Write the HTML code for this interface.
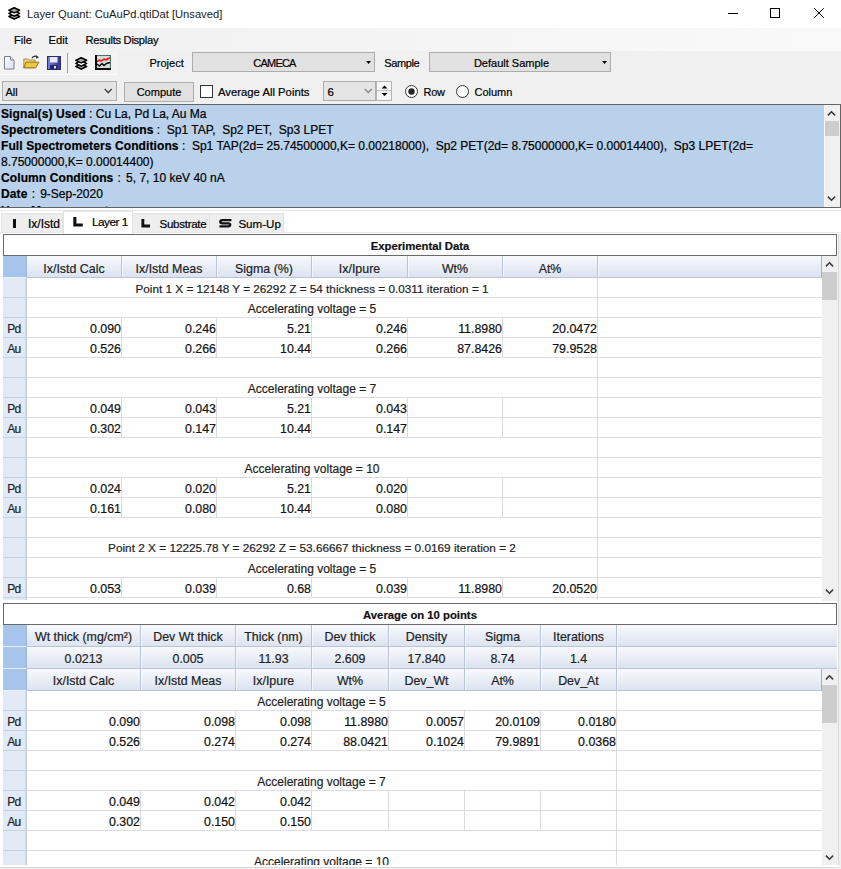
<!DOCTYPE html><html><head><meta charset="utf-8"><style>
html,body{margin:0;padding:0;} body{width:841px;height:869px;overflow:hidden;position:relative;background:#F0F0F0;font-family:"Liberation Sans", sans-serif;}
.t{position:absolute;white-space:pre;-webkit-text-stroke:0.2px currentColor;} .b{position:absolute;box-sizing:border-box;} svg{position:absolute;}
</style></head><body>
<div class="b" style="left:0px;top:0px;width:841px;height:28px;background:#FFFFFF;"></div>
<svg style="left:8px;top:7px" width="13" height="13" viewBox="0 0 13 13"><path d="M0.9 9.5 L6.25 6.8 L11.6 9.5 L6.25 12.2 Z" fill="#9A9A9A" stroke="#000" stroke-width="1.5" stroke-linejoin="round"/><path d="M0.9 6.4 L6.25 3.7 L11.6 6.4 L6.25 9.1 Z" fill="#FFF" stroke="#000" stroke-width="1.5" stroke-linejoin="round"/><path d="M0.9 3.3 L6.25 0.8 L11.6 3.3 L6.25 5.9 Z" fill="#A8A8A8" stroke="#000" stroke-width="1.5" stroke-linejoin="round"/></svg>
<div class="t" style="left:27px;top:8.82px;font-size:11.2px;line-height:11.2px;color:#1A1A1A;-webkit-text-stroke:0;">Layer Quant: CuAuPd.qtiDat [Unsaved]</div>
<div class="b" style="left:728px;top:13px;width:10px;height:1px;background:#000;"></div>
<div class="b" style="left:770px;top:8px;width:10px;height:10px;border:1px solid #000;"></div>
<svg style="left:814px;top:8px" width="10" height="10" viewBox="0 0 10 10"><path d="M0.3 0.3 L9.7 9.7 M9.7 0.3 L0.3 9.7" stroke="#000" stroke-width="1"/></svg>
<div class="b" style="left:0px;top:28px;width:841px;height:23px;background:linear-gradient(to right,#F0F0F0,#F9F9F9);"></div>
<div class="t" style="left:14px;top:35.02px;font-size:11.2px;line-height:11.2px;color:#000;">File</div>
<div class="t" style="left:48.5px;top:35.02px;font-size:11.2px;line-height:11.2px;color:#000;">Edit</div>
<div class="t" style="left:85.6px;top:35.02px;font-size:11.2px;line-height:11.2px;color:#000;letter-spacing:-0.3px;">Results Display</div>
<div class="b" style="left:0px;top:51px;width:118px;height:24px;background:#F3F3F3;border-bottom:1px solid #FDFDFD;"></div>
<svg style="left:3px;top:55px" width="12" height="15" viewBox="0 0 12 15"><defs><linearGradient id="nd" x1="0" y1="0" x2="1" y2="1"><stop offset="0" stop-color="#FFFFFF"/><stop offset="1" stop-color="#D8E0EA"/></linearGradient></defs><path d="M1.5 1.5 H7.5 L11 5 V14 H1.5 Z" fill="url(#nd)" stroke="#7A7F88"/><path d="M7.5 1.5 V5 H11" fill="#F0F0F0" stroke="#7A7F88"/></svg>
<svg style="left:23px;top:54px" width="17" height="15" viewBox="0 0 17 15"><path d="M0.8 5 H4.8 L5.8 6 H12.2 V13.8 H0.8 Z" fill="#EED57A" stroke="#A88A3A" stroke-width="0.9"/><path d="M3 8.2 H16 L12.8 13.8 H0.8 Z" fill="#F0C640" stroke="#8A6A20" stroke-width="0.9"/><path d="M8.8 4.2 Q11 1 14.2 2.6" fill="none" stroke="#303030" stroke-width="1.1"/><path d="M13 1.2 L16 3.2 L13.2 4.8 Z" fill="#303030"/></svg>
<svg style="left:47px;top:56px" width="14" height="14" viewBox="0 0 14 14"><defs><linearGradient id="fl" x1="0" y1="0" x2="1" y2="0"><stop offset="0" stop-color="#8080DA"/><stop offset="1" stop-color="#34348C"/></linearGradient></defs><rect x="0.5" y="0.5" width="13" height="13" fill="url(#fl)" stroke="#2C2C78"/><rect x="3" y="1" width="7.5" height="5.5" fill="#E8ECF8"/><rect x="3" y="9" width="7.5" height="4.5" fill="#262670"/><rect x="7" y="10" width="2" height="2.5" fill="#E0E0F0"/></svg>
<div class="b" style="left:67px;top:53px;width:1px;height:20px;background:#A0A0A0;"></div>
<svg style="left:75px;top:57px" width="13" height="13" viewBox="0 0 13 13"><path d="M0.9 9.5 L6.25 6.8 L11.6 9.5 L6.25 12.2 Z" fill="#9A9A9A" stroke="#000" stroke-width="1.5" stroke-linejoin="round"/><path d="M0.9 6.4 L6.25 3.7 L11.6 6.4 L6.25 9.1 Z" fill="#FFF" stroke="#000" stroke-width="1.5" stroke-linejoin="round"/><path d="M0.9 3.3 L6.25 0.8 L11.6 3.3 L6.25 5.9 Z" fill="#A8A8A8" stroke="#000" stroke-width="1.5" stroke-linejoin="round"/></svg>
<svg style="left:95px;top:55px" width="16" height="15" viewBox="0 0 16 15"><rect x="0" y="0" width="16" height="15" fill="#4F6F6C"/><rect x="2" y="1" width="13" height="12" fill="#D4DCDA"/><path d="M2 6.5 L4.5 5.2 L6.5 5.8 L9 4.2 L11 4.8 L15 2.8" fill="none" stroke="#E01818" stroke-width="1.6"/><path d="M2 9 L4.5 11 L7 8.5 L9 10.5 L11.5 8.5 L15 7.5" fill="none" stroke="#101010" stroke-width="1.4"/><rect x="0" y="0" width="2" height="15" fill="#080808"/><rect x="0" y="13" width="16" height="2" fill="#080808"/></svg>
<div class="t" style="left:149.5px;top:58.19px;font-size:11px;line-height:11px;color:#000;">Project</div>
<div class="b" style="left:192px;top:52px;width:183px;height:20px;background:#E1E1E1;border:1px solid #ADADAD;"></div>
<div class="t" style="left:192px;top:58.19px;font-size:11px;line-height:11px;color:#000;width:165px;text-align:center;letter-spacing:-0.8px;">CAMECA</div>
<svg style="left:366px;top:61px" width="5" height="3" viewBox="0 0 5 3"><path d="M0 0 H5 L2.5 3 Z" fill="#000"/></svg>
<div class="t" style="left:384.3px;top:58.19px;font-size:11px;line-height:11px;color:#000;letter-spacing:-0.4px;">Sample</div>
<div class="b" style="left:429px;top:52px;width:182px;height:20px;background:#E1E1E1;border:1px solid #ADADAD;"></div>
<div class="t" style="left:429px;top:58.19px;font-size:11px;line-height:11px;color:#000;width:165px;text-align:center;">Default Sample</div>
<svg style="left:602px;top:61px" width="5" height="3" viewBox="0 0 5 3"><path d="M0 0 H5 L2.5 3 Z" fill="#000"/></svg>
<div class="b" style="left:2px;top:81px;width:115px;height:20px;background:#E5E5E5;border:1px solid #ADADAD;"></div>
<div class="t" style="left:5.5px;top:87.19px;font-size:11px;line-height:11px;color:#000;">All</div>
<svg style="left:104px;top:88px" width="9" height="6" viewBox="0 0 9 6"><path d="M0.7 0.9 L4.2 4.6 L7.7 0.9" fill="none" stroke="#4A4A4A" stroke-width="1.5"/></svg>
<div class="b" style="left:124px;top:82px;width:70px;height:20px;background:#E1E1E1;border:1px solid #ADADAD;"></div>
<div class="t" style="left:124px;top:86.69px;font-size:11px;line-height:11px;color:#000;width:70px;text-align:center;">Compute</div>
<div class="b" style="left:200px;top:84.5px;width:13px;height:13px;background:#FFF;border:1px solid #333;"></div>
<div class="t" style="left:218px;top:87.43px;font-size:11.3px;line-height:11.3px;color:#000;">Average All Points</div>
<div class="b" style="left:323px;top:81px;width:53px;height:20px;background:#E5E5E5;border:1px solid #ADADAD;"></div>
<div class="t" style="left:327.5px;top:86.77px;font-size:11.5px;line-height:11.5px;color:#000;">6</div>
<svg style="left:363.5px;top:88px" width="9" height="6" viewBox="0 0 9 6"><path d="M0.7 0.9 L4.2 4.6 L7.7 0.9" fill="none" stroke="#8A8A8A" stroke-width="1.4"/></svg>
<div class="b" style="left:376px;top:81px;width:16px;height:20px;background:#F6F6F6;border:1px solid #B5B5B5;"></div>
<div class="b" style="left:377px;top:90px;width:14px;height:1px;background:#C0C0C0;"></div>
<svg style="left:381px;top:84px" width="7" height="14" viewBox="0 0 7 14"><path d="M0.5 4.5 L3.5 1.5 L6.5 4.5 Z M0.5 9 L3.5 12 L6.5 9 Z" fill="#000"/></svg>
<svg style="left:404.5px;top:85px" width="13" height="13" viewBox="0 0 13 13"><circle cx="6.5" cy="6.5" r="6" fill="#FFF" stroke="#333"/><circle cx="6.5" cy="6.5" r="3.2" fill="#222"/></svg>
<div class="t" style="left:423.5px;top:86.69px;font-size:11px;line-height:11px;color:#000;letter-spacing:-0.3px;">Row</div>
<svg style="left:456px;top:85px" width="13" height="13" viewBox="0 0 13 13"><circle cx="6.5" cy="6.5" r="6" fill="#FFF" stroke="#333"/></svg>
<div class="t" style="left:474.5px;top:86.69px;font-size:11px;line-height:11px;color:#000;">Column</div>
<div class="b" style="left:0px;top:104px;width:841px;height:104px;background:#B9D1EA;border-top:1px solid #646464;border-bottom:1px solid #646464;border-right:1px solid #646464;"></div>
<div style="position:absolute;left:0;top:105px;width:823px;height:102px;overflow:hidden;">
<div class="t" style="left:1px;top:3.04px;font-size:12px;line-height:12px;color:#000;"><b style="letter-spacing:0.1px">Signal(s) Used</b> : Cu La, Pd La, Au Ma</div>
<div class="t" style="left:1px;top:19.04px;font-size:12px;line-height:12px;color:#000;"><b style="letter-spacing:0.1px">Spectrometers Conditions</b> :  Sp1 TAP,  Sp2 PET,  Sp3 LPET</div>
<div class="t" style="left:1px;top:35.04px;font-size:12px;line-height:12px;color:#000;"><b style="letter-spacing:0.1px">Full Spectrometers Conditions</b> :  Sp1 TAP(2d= 25.74500000,K= 0.00218000),  Sp2 PET(2d= 8.75000000,K= 0.00014400),  Sp3 LPET(2d=</div>
<div class="t" style="left:1px;top:51.04px;font-size:12px;line-height:12px;color:#000;"><b style="letter-spacing:0.1px"></b>8.75000000,K= 0.00014400)</div>
<div class="t" style="left:1px;top:67.04px;font-size:12px;line-height:12px;color:#000;"><b style="letter-spacing:0.1px">Column Conditions</b><span style="letter-spacing:0.9px"> : </span>5, 7, 10 keV 40 nA</div>
<div class="t" style="left:1px;top:83.04px;font-size:12px;line-height:12px;color:#000;"><b style="letter-spacing:0.1px">Date</b><span style="letter-spacing:0.9px"> : </span>9-Sep-2020</div>
<div class="t" style="left:1px;top:99.54px;font-size:12px;line-height:12px;color:#000;"><b>User Measurement</b> : </div>
</div>
<div class="b" style="left:824px;top:105px;width:16px;height:102px;background:#F0F0F0;border-left:1px solid #FAFAFA;"></div>
<div class="b" style="left:825px;top:121px;width:14px;height:15px;background:#CDCDCD;"></div>
<svg style="left:827.4px;top:109.8px" width="9" height="7" viewBox="0 0 9 7"><path d="M0.9 5.4 L4.5 1.8 L8.1 5.4" fill="none" stroke="#3A3A3A" stroke-width="1.6"/></svg>
<svg style="left:827.4px;top:195.3px" width="9" height="7" viewBox="0 0 9 7"><path d="M0.9 1.6 L4.5 5.2 L8.1 1.6" fill="none" stroke="#3A3A3A" stroke-width="1.6"/></svg>
<div class="b" style="left:0px;top:208px;width:841px;height:26px;background:#FFFFFF;"></div>
<div class="b" style="left:0px;top:210px;width:841px;height:1px;background:#E9E9E9;"></div>
<div class="b" style="left:0px;top:232px;width:841px;height:1px;background:#E6E6E6;"></div>
<div class="b" style="left:1px;top:213px;width:62px;height:19px;background:#EEEEEE;border:1px solid #E2E2E2;border-bottom:none;"></div>
<div class="b" style="left:63px;top:211px;width:70px;height:23px;background:#FFFFFF;border:1px solid #E2E2E2;border-bottom:none;"></div>
<div class="b" style="left:133px;top:213px;width:77px;height:19px;background:#EEEEEE;border:1px solid #E2E2E2;border-bottom:none;border-left:none;"></div>
<div class="b" style="left:210px;top:213px;width:74px;height:19px;background:#EEEEEE;border:1px solid #E2E2E2;border-bottom:none;border-left:none;"></div>
<div class="b" style="left:13px;top:218.5px;width:3px;height:9.5px;background:#111;"></div>
<div class="t" style="left:28px;top:217.84px;font-size:12px;line-height:12px;color:#000;">Ix/Istd</div>
<svg style="left:73px;top:216.5px" width="10" height="10" viewBox="0 0 10 10"><path d="M0.3 0 H3.4 V6.5 H9.8 V9.6 H0.3 Z" fill="#111"/></svg>
<div class="t" style="left:92px;top:217.01px;font-size:11.8px;line-height:11.8px;color:#000;letter-spacing:-0.5px;">Layer 1</div>
<svg style="left:141px;top:219px" width="10" height="9" viewBox="0 0 10 9"><path d="M0.4 0 H3.3 V5.6 H9 V8.5 H0.4 Z" fill="#111"/></svg>
<div class="t" style="left:159.5px;top:218.18px;font-size:11.6px;line-height:11.6px;color:#000;letter-spacing:-0.3px;">Substrate</div>
<svg style="left:219px;top:219px" width="13" height="9" viewBox="0 0 13 9"><path d="M12.4 1.2 H3.4 Q1.3 1.2 1.3 2.7 Q1.3 4.3 3.4 4.3 H9.2 Q11.2 4.3 11.2 5.8 Q11.2 7.4 9.2 7.4 H0.4" fill="none" stroke="#111" stroke-width="2.3"/></svg>
<div class="t" style="left:238.4px;top:218.18px;font-size:11.6px;line-height:11.6px;color:#000;">Sum-Up</div>
<div class="b" style="left:0px;top:234px;width:839px;height:634px;background:#FFFFFF;border-right:1px solid #DADADA;border-bottom:1px solid #DADADA;"></div>
<div class="b" style="left:0px;top:868px;width:841px;height:1px;background:#F0F0F0;"></div>
<div class="b" style="left:3px;top:234px;width:834px;height:22px;background:#FFFFFF;border:1px solid #696969;"></div>
<div class="t" style="left:3px;top:240.93px;font-size:11.3px;line-height:11.3px;color:#111;font-weight:bold;width:834px;text-align:center;">Experimental Data</div>
<div class="b" style="left:3px;top:256px;width:24px;height:22px;background:#A7C5EB;border-bottom:1px solid #E9F0FA;border-right:1px solid #9DB5D5;"></div>
<div class="b" style="left:27px;top:256px;width:795px;height:22px;background:linear-gradient(#F7F9FC,#DCE3F0);border-bottom:1px solid #B9C5D6;border-right:1px solid #9FB0C8;"></div>
<div class="b" style="left:121px;top:256px;width:1px;height:21px;background:#B9C5D6;"></div>
<div class="b" style="left:122px;top:256px;width:1px;height:21px;background:rgba(255,255,255,0.6);"></div>
<div class="b" style="left:216px;top:256px;width:1px;height:21px;background:#B9C5D6;"></div>
<div class="b" style="left:217px;top:256px;width:1px;height:21px;background:rgba(255,255,255,0.6);"></div>
<div class="b" style="left:311px;top:256px;width:1px;height:21px;background:#B9C5D6;"></div>
<div class="b" style="left:312px;top:256px;width:1px;height:21px;background:rgba(255,255,255,0.6);"></div>
<div class="b" style="left:407px;top:256px;width:1px;height:21px;background:#B9C5D6;"></div>
<div class="b" style="left:408px;top:256px;width:1px;height:21px;background:rgba(255,255,255,0.6);"></div>
<div class="b" style="left:502px;top:256px;width:1px;height:21px;background:#B9C5D6;"></div>
<div class="b" style="left:503px;top:256px;width:1px;height:21px;background:rgba(255,255,255,0.6);"></div>
<div class="b" style="left:597px;top:256px;width:1px;height:21px;background:#B9C5D6;"></div>
<div class="b" style="left:598px;top:256px;width:1px;height:21px;background:rgba(255,255,255,0.6);"></div>
<div class="t" style="left:27px;top:263.10px;font-size:12.4px;line-height:12.4px;color:#1E1E1E;width:94px;text-align:center;">Ix/Istd Calc</div>
<div class="t" style="left:122px;top:263.10px;font-size:12.4px;line-height:12.4px;color:#1E1E1E;width:94px;text-align:center;">Ix/Istd Meas</div>
<div class="t" style="left:217px;top:263.10px;font-size:12.4px;line-height:12.4px;color:#1E1E1E;width:94px;text-align:center;">Sigma (%)</div>
<div class="t" style="left:312px;top:263.10px;font-size:12.4px;line-height:12.4px;color:#1E1E1E;width:95px;text-align:center;">Ix/Ipure</div>
<div class="t" style="left:408px;top:263.10px;font-size:12.4px;line-height:12.4px;color:#1E1E1E;width:94px;text-align:center;">Wt%</div>
<div class="t" style="left:503px;top:263.10px;font-size:12.4px;line-height:12.4px;color:#1E1E1E;width:94px;text-align:center;">At%</div>
<div class="b" style="left:3px;top:278px;width:24px;height:322px;background:#E1EAF6;border-right:1px solid #C2CCDA;"></div>
<div class="b" style="left:25px;top:278px;width:1px;height:322px;background:#D3DAE6;"></div>
<div class="b" style="left:3px;top:297px;width:23px;height:1px;background:#C9D2DF;"></div>
<div class="b" style="left:27px;top:297px;width:795px;height:1px;background:#DBDCE4;"></div>
<div class="t" style="left:27px;top:282.95px;font-size:11.75px;line-height:11.75px;color:#1E1E1E;width:570px;text-align:center;">Point 1 X = 12148 Y = 26292 Z = 54 thickness = 0.0311 iteration = 1</div>
<div class="b" style="left:3px;top:317px;width:23px;height:1px;background:#C9D2DF;"></div>
<div class="b" style="left:27px;top:317px;width:795px;height:1px;background:#DBDCE4;"></div>
<div class="t" style="left:27px;top:303.34px;font-size:12px;line-height:12px;color:#1E1E1E;width:570px;text-align:center;">Accelerating voltage = 5</div>
<div class="b" style="left:3px;top:337px;width:23px;height:1px;background:#C9D2DF;"></div>
<div class="b" style="left:27px;top:337px;width:795px;height:1px;background:#DBDCE4;"></div>
<div class="t" style="left:7.2px;top:323.34px;font-size:12px;line-height:12px;color:#1E1E1E;letter-spacing:-0.6px;">Pd</div>
<div class="b" style="left:121px;top:318px;width:1px;height:19px;background:#D8DAE3;"></div>
<div class="b" style="left:216px;top:318px;width:1px;height:19px;background:#D8DAE3;"></div>
<div class="b" style="left:311px;top:318px;width:1px;height:19px;background:#D8DAE3;"></div>
<div class="b" style="left:407px;top:318px;width:1px;height:19px;background:#D8DAE3;"></div>
<div class="b" style="left:502px;top:318px;width:1px;height:19px;background:#D8DAE3;"></div>
<div class="t" style="left:27px;top:323.00px;font-size:12.4px;line-height:12.4px;color:#111;width:94px;text-align:right;">0.090</div>
<div class="t" style="left:122px;top:323.00px;font-size:12.4px;line-height:12.4px;color:#111;width:94px;text-align:right;">0.246</div>
<div class="t" style="left:217px;top:323.00px;font-size:12.4px;line-height:12.4px;color:#111;width:94px;text-align:right;">5.21</div>
<div class="t" style="left:312px;top:323.00px;font-size:12.4px;line-height:12.4px;color:#111;width:95px;text-align:right;">0.246</div>
<div class="t" style="left:408px;top:323.00px;font-size:12.4px;line-height:12.4px;color:#111;width:94px;text-align:right;">11.8980</div>
<div class="t" style="left:503px;top:323.00px;font-size:12.4px;line-height:12.4px;color:#111;width:94px;text-align:right;">20.0472</div>
<div class="b" style="left:3px;top:357px;width:23px;height:1px;background:#C9D2DF;"></div>
<div class="b" style="left:27px;top:357px;width:795px;height:1px;background:#DBDCE4;"></div>
<div class="t" style="left:7.2px;top:343.34px;font-size:12px;line-height:12px;color:#1E1E1E;letter-spacing:-0.6px;">Au</div>
<div class="b" style="left:121px;top:338px;width:1px;height:19px;background:#D8DAE3;"></div>
<div class="b" style="left:216px;top:338px;width:1px;height:19px;background:#D8DAE3;"></div>
<div class="b" style="left:311px;top:338px;width:1px;height:19px;background:#D8DAE3;"></div>
<div class="b" style="left:407px;top:338px;width:1px;height:19px;background:#D8DAE3;"></div>
<div class="b" style="left:502px;top:338px;width:1px;height:19px;background:#D8DAE3;"></div>
<div class="t" style="left:27px;top:343.00px;font-size:12.4px;line-height:12.4px;color:#111;width:94px;text-align:right;">0.526</div>
<div class="t" style="left:122px;top:343.00px;font-size:12.4px;line-height:12.4px;color:#111;width:94px;text-align:right;">0.266</div>
<div class="t" style="left:217px;top:343.00px;font-size:12.4px;line-height:12.4px;color:#111;width:94px;text-align:right;">10.44</div>
<div class="t" style="left:312px;top:343.00px;font-size:12.4px;line-height:12.4px;color:#111;width:95px;text-align:right;">0.266</div>
<div class="t" style="left:408px;top:343.00px;font-size:12.4px;line-height:12.4px;color:#111;width:94px;text-align:right;">87.8426</div>
<div class="t" style="left:503px;top:343.00px;font-size:12.4px;line-height:12.4px;color:#111;width:94px;text-align:right;">79.9528</div>
<div class="b" style="left:3px;top:377px;width:23px;height:1px;background:#C9D2DF;"></div>
<div class="b" style="left:27px;top:377px;width:795px;height:1px;background:#DBDCE4;"></div>
<div class="t" style="left:27px;top:363.34px;font-size:12px;line-height:12px;color:#1E1E1E;width:570px;text-align:center;"></div>
<div class="b" style="left:3px;top:397px;width:23px;height:1px;background:#C9D2DF;"></div>
<div class="b" style="left:27px;top:397px;width:795px;height:1px;background:#DBDCE4;"></div>
<div class="t" style="left:27px;top:383.34px;font-size:12px;line-height:12px;color:#1E1E1E;width:570px;text-align:center;">Accelerating voltage = 7</div>
<div class="b" style="left:3px;top:417px;width:23px;height:1px;background:#C9D2DF;"></div>
<div class="b" style="left:27px;top:417px;width:795px;height:1px;background:#DBDCE4;"></div>
<div class="t" style="left:7.2px;top:403.34px;font-size:12px;line-height:12px;color:#1E1E1E;letter-spacing:-0.6px;">Pd</div>
<div class="b" style="left:121px;top:398px;width:1px;height:19px;background:#D8DAE3;"></div>
<div class="b" style="left:216px;top:398px;width:1px;height:19px;background:#D8DAE3;"></div>
<div class="b" style="left:311px;top:398px;width:1px;height:19px;background:#D8DAE3;"></div>
<div class="b" style="left:407px;top:398px;width:1px;height:19px;background:#D8DAE3;"></div>
<div class="b" style="left:502px;top:398px;width:1px;height:19px;background:#D8DAE3;"></div>
<div class="t" style="left:27px;top:403.00px;font-size:12.4px;line-height:12.4px;color:#111;width:94px;text-align:right;">0.049</div>
<div class="t" style="left:122px;top:403.00px;font-size:12.4px;line-height:12.4px;color:#111;width:94px;text-align:right;">0.043</div>
<div class="t" style="left:217px;top:403.00px;font-size:12.4px;line-height:12.4px;color:#111;width:94px;text-align:right;">5.21</div>
<div class="t" style="left:312px;top:403.00px;font-size:12.4px;line-height:12.4px;color:#111;width:95px;text-align:right;">0.043</div>
<div class="b" style="left:3px;top:437px;width:23px;height:1px;background:#C9D2DF;"></div>
<div class="b" style="left:27px;top:437px;width:795px;height:1px;background:#DBDCE4;"></div>
<div class="t" style="left:7.2px;top:423.34px;font-size:12px;line-height:12px;color:#1E1E1E;letter-spacing:-0.6px;">Au</div>
<div class="b" style="left:121px;top:418px;width:1px;height:19px;background:#D8DAE3;"></div>
<div class="b" style="left:216px;top:418px;width:1px;height:19px;background:#D8DAE3;"></div>
<div class="b" style="left:311px;top:418px;width:1px;height:19px;background:#D8DAE3;"></div>
<div class="b" style="left:407px;top:418px;width:1px;height:19px;background:#D8DAE3;"></div>
<div class="b" style="left:502px;top:418px;width:1px;height:19px;background:#D8DAE3;"></div>
<div class="t" style="left:27px;top:423.00px;font-size:12.4px;line-height:12.4px;color:#111;width:94px;text-align:right;">0.302</div>
<div class="t" style="left:122px;top:423.00px;font-size:12.4px;line-height:12.4px;color:#111;width:94px;text-align:right;">0.147</div>
<div class="t" style="left:217px;top:423.00px;font-size:12.4px;line-height:12.4px;color:#111;width:94px;text-align:right;">10.44</div>
<div class="t" style="left:312px;top:423.00px;font-size:12.4px;line-height:12.4px;color:#111;width:95px;text-align:right;">0.147</div>
<div class="b" style="left:3px;top:457px;width:23px;height:1px;background:#C9D2DF;"></div>
<div class="b" style="left:27px;top:457px;width:795px;height:1px;background:#DBDCE4;"></div>
<div class="t" style="left:27px;top:443.34px;font-size:12px;line-height:12px;color:#1E1E1E;width:570px;text-align:center;"></div>
<div class="b" style="left:3px;top:477px;width:23px;height:1px;background:#C9D2DF;"></div>
<div class="b" style="left:27px;top:477px;width:795px;height:1px;background:#DBDCE4;"></div>
<div class="t" style="left:27px;top:463.34px;font-size:12px;line-height:12px;color:#1E1E1E;width:570px;text-align:center;">Accelerating voltage = 10</div>
<div class="b" style="left:3px;top:497px;width:23px;height:1px;background:#C9D2DF;"></div>
<div class="b" style="left:27px;top:497px;width:795px;height:1px;background:#DBDCE4;"></div>
<div class="t" style="left:7.2px;top:483.34px;font-size:12px;line-height:12px;color:#1E1E1E;letter-spacing:-0.6px;">Pd</div>
<div class="b" style="left:121px;top:478px;width:1px;height:19px;background:#D8DAE3;"></div>
<div class="b" style="left:216px;top:478px;width:1px;height:19px;background:#D8DAE3;"></div>
<div class="b" style="left:311px;top:478px;width:1px;height:19px;background:#D8DAE3;"></div>
<div class="b" style="left:407px;top:478px;width:1px;height:19px;background:#D8DAE3;"></div>
<div class="b" style="left:502px;top:478px;width:1px;height:19px;background:#D8DAE3;"></div>
<div class="t" style="left:27px;top:483.00px;font-size:12.4px;line-height:12.4px;color:#111;width:94px;text-align:right;">0.024</div>
<div class="t" style="left:122px;top:483.00px;font-size:12.4px;line-height:12.4px;color:#111;width:94px;text-align:right;">0.020</div>
<div class="t" style="left:217px;top:483.00px;font-size:12.4px;line-height:12.4px;color:#111;width:94px;text-align:right;">5.21</div>
<div class="t" style="left:312px;top:483.00px;font-size:12.4px;line-height:12.4px;color:#111;width:95px;text-align:right;">0.020</div>
<div class="b" style="left:3px;top:517px;width:23px;height:1px;background:#C9D2DF;"></div>
<div class="b" style="left:27px;top:517px;width:795px;height:1px;background:#DBDCE4;"></div>
<div class="t" style="left:7.2px;top:503.34px;font-size:12px;line-height:12px;color:#1E1E1E;letter-spacing:-0.6px;">Au</div>
<div class="b" style="left:121px;top:498px;width:1px;height:19px;background:#D8DAE3;"></div>
<div class="b" style="left:216px;top:498px;width:1px;height:19px;background:#D8DAE3;"></div>
<div class="b" style="left:311px;top:498px;width:1px;height:19px;background:#D8DAE3;"></div>
<div class="b" style="left:407px;top:498px;width:1px;height:19px;background:#D8DAE3;"></div>
<div class="b" style="left:502px;top:498px;width:1px;height:19px;background:#D8DAE3;"></div>
<div class="t" style="left:27px;top:503.00px;font-size:12.4px;line-height:12.4px;color:#111;width:94px;text-align:right;">0.161</div>
<div class="t" style="left:122px;top:503.00px;font-size:12.4px;line-height:12.4px;color:#111;width:94px;text-align:right;">0.080</div>
<div class="t" style="left:217px;top:503.00px;font-size:12.4px;line-height:12.4px;color:#111;width:94px;text-align:right;">10.44</div>
<div class="t" style="left:312px;top:503.00px;font-size:12.4px;line-height:12.4px;color:#111;width:95px;text-align:right;">0.080</div>
<div class="b" style="left:3px;top:537px;width:23px;height:1px;background:#C9D2DF;"></div>
<div class="b" style="left:27px;top:537px;width:795px;height:1px;background:#DBDCE4;"></div>
<div class="t" style="left:27px;top:523.34px;font-size:12px;line-height:12px;color:#1E1E1E;width:570px;text-align:center;"></div>
<div class="b" style="left:3px;top:557px;width:23px;height:1px;background:#C9D2DF;"></div>
<div class="b" style="left:27px;top:557px;width:795px;height:1px;background:#DBDCE4;"></div>
<div class="t" style="left:27px;top:542.91px;font-size:11.8px;line-height:11.8px;color:#1E1E1E;width:570px;text-align:center;">Point 2 X = 12225.78 Y = 26292 Z = 53.66667 thickness = 0.0169 iteration = 2</div>
<div class="b" style="left:3px;top:577px;width:23px;height:1px;background:#C9D2DF;"></div>
<div class="b" style="left:27px;top:577px;width:795px;height:1px;background:#DBDCE4;"></div>
<div class="t" style="left:27px;top:563.34px;font-size:12px;line-height:12px;color:#1E1E1E;width:570px;text-align:center;">Accelerating voltage = 5</div>
<div class="b" style="left:3px;top:597px;width:23px;height:1px;background:#C9D2DF;"></div>
<div class="b" style="left:27px;top:597px;width:795px;height:1px;background:#DBDCE4;"></div>
<div class="t" style="left:7.2px;top:583.34px;font-size:12px;line-height:12px;color:#1E1E1E;letter-spacing:-0.6px;">Pd</div>
<div class="b" style="left:121px;top:578px;width:1px;height:19px;background:#D8DAE3;"></div>
<div class="b" style="left:216px;top:578px;width:1px;height:19px;background:#D8DAE3;"></div>
<div class="b" style="left:311px;top:578px;width:1px;height:19px;background:#D8DAE3;"></div>
<div class="b" style="left:407px;top:578px;width:1px;height:19px;background:#D8DAE3;"></div>
<div class="b" style="left:502px;top:578px;width:1px;height:19px;background:#D8DAE3;"></div>
<div class="t" style="left:27px;top:583.00px;font-size:12.4px;line-height:12.4px;color:#111;width:94px;text-align:right;">0.053</div>
<div class="t" style="left:122px;top:583.00px;font-size:12.4px;line-height:12.4px;color:#111;width:94px;text-align:right;">0.039</div>
<div class="t" style="left:217px;top:583.00px;font-size:12.4px;line-height:12.4px;color:#111;width:94px;text-align:right;">0.68</div>
<div class="t" style="left:312px;top:583.00px;font-size:12.4px;line-height:12.4px;color:#111;width:95px;text-align:right;">0.039</div>
<div class="t" style="left:408px;top:583.00px;font-size:12.4px;line-height:12.4px;color:#111;width:94px;text-align:right;">11.8980</div>
<div class="t" style="left:503px;top:583.00px;font-size:12.4px;line-height:12.4px;color:#111;width:94px;text-align:right;">20.0520</div>
<div class="b" style="left:597px;top:278px;width:1px;height:322px;background:#D8DAE3;"></div>
<div class="b" style="left:822px;top:256px;width:16px;height:345px;background:#F0F0F0;"></div>
<div class="b" style="left:822px;top:272px;width:15px;height:28px;background:#CDCDCD;"></div>
<svg style="left:824.7px;top:261.4px" width="9" height="7" viewBox="0 0 9 7"><path d="M0.9 5.4 L4.5 1.8 L8.1 5.4" fill="none" stroke="#3A3A3A" stroke-width="1.6"/></svg>
<svg style="left:824.7px;top:588.0px" width="9" height="7" viewBox="0 0 9 7"><path d="M0.9 1.6 L4.5 5.2 L8.1 1.6" fill="none" stroke="#3A3A3A" stroke-width="1.6"/></svg>
<div class="b" style="left:3px;top:603px;width:834px;height:22px;background:#FFFFFF;border:1px solid #696969;"></div>
<div class="t" style="left:3px;top:610.43px;font-size:11.3px;line-height:11.3px;color:#111;font-weight:bold;width:834px;text-align:center;">Average on 10 points</div>
<div class="b" style="left:3px;top:625px;width:24px;height:22px;background:#A7C5EB;border-bottom:1px solid #E9F0FA;border-right:1px solid #9DB5D5;"></div>
<div class="b" style="left:27px;top:625px;width:810px;height:22px;background:linear-gradient(#F7F9FC,#DCE3F0);border-bottom:1px solid #B9C5D6;"></div>
<div class="b" style="left:140px;top:625px;width:1px;height:21px;background:#B9C5D6;"></div>
<div class="b" style="left:141px;top:625px;width:1px;height:21px;background:rgba(255,255,255,0.6);"></div>
<div class="b" style="left:235px;top:625px;width:1px;height:21px;background:#B9C5D6;"></div>
<div class="b" style="left:236px;top:625px;width:1px;height:21px;background:rgba(255,255,255,0.6);"></div>
<div class="b" style="left:311px;top:625px;width:1px;height:21px;background:#B9C5D6;"></div>
<div class="b" style="left:312px;top:625px;width:1px;height:21px;background:rgba(255,255,255,0.6);"></div>
<div class="b" style="left:388px;top:625px;width:1px;height:21px;background:#B9C5D6;"></div>
<div class="b" style="left:389px;top:625px;width:1px;height:21px;background:rgba(255,255,255,0.6);"></div>
<div class="b" style="left:464px;top:625px;width:1px;height:21px;background:#B9C5D6;"></div>
<div class="b" style="left:465px;top:625px;width:1px;height:21px;background:rgba(255,255,255,0.6);"></div>
<div class="b" style="left:540px;top:625px;width:1px;height:21px;background:#B9C5D6;"></div>
<div class="b" style="left:541px;top:625px;width:1px;height:21px;background:rgba(255,255,255,0.6);"></div>
<div class="b" style="left:616px;top:625px;width:1px;height:21px;background:#B9C5D6;"></div>
<div class="b" style="left:617px;top:625px;width:1px;height:21px;background:rgba(255,255,255,0.6);"></div>
<div class="t" style="left:27px;top:631.10px;font-size:12.4px;line-height:12.4px;color:#1E1E1E;width:113px;text-align:center;">Wt thick (mg/cm²)</div>
<div class="t" style="left:141px;top:631.10px;font-size:12.4px;line-height:12.4px;color:#1E1E1E;width:94px;text-align:center;">Dev Wt thick</div>
<div class="t" style="left:236px;top:631.10px;font-size:12.4px;line-height:12.4px;color:#1E1E1E;width:75px;text-align:center;">Thick (nm)</div>
<div class="t" style="left:312px;top:631.10px;font-size:12.4px;line-height:12.4px;color:#1E1E1E;width:76px;text-align:center;">Dev thick</div>
<div class="t" style="left:389px;top:631.10px;font-size:12.4px;line-height:12.4px;color:#1E1E1E;width:75px;text-align:center;">Density</div>
<div class="t" style="left:465px;top:631.10px;font-size:12.4px;line-height:12.4px;color:#1E1E1E;width:75px;text-align:center;">Sigma</div>
<div class="t" style="left:541px;top:631.10px;font-size:12.4px;line-height:12.4px;color:#1E1E1E;width:75px;text-align:center;">Iterations</div>
<div class="b" style="left:3px;top:647px;width:24px;height:22px;background:#A7C5EB;border-bottom:1px solid #E9F0FA;border-right:1px solid #9DB5D5;"></div>
<div class="b" style="left:27px;top:647px;width:810px;height:22px;background:linear-gradient(#F7F9FC,#DCE3F0);border-bottom:1px solid #B9C5D6;"></div>
<div class="b" style="left:140px;top:647px;width:1px;height:21px;background:#B9C5D6;"></div>
<div class="b" style="left:141px;top:647px;width:1px;height:21px;background:rgba(255,255,255,0.6);"></div>
<div class="b" style="left:235px;top:647px;width:1px;height:21px;background:#B9C5D6;"></div>
<div class="b" style="left:236px;top:647px;width:1px;height:21px;background:rgba(255,255,255,0.6);"></div>
<div class="b" style="left:311px;top:647px;width:1px;height:21px;background:#B9C5D6;"></div>
<div class="b" style="left:312px;top:647px;width:1px;height:21px;background:rgba(255,255,255,0.6);"></div>
<div class="b" style="left:388px;top:647px;width:1px;height:21px;background:#B9C5D6;"></div>
<div class="b" style="left:389px;top:647px;width:1px;height:21px;background:rgba(255,255,255,0.6);"></div>
<div class="b" style="left:464px;top:647px;width:1px;height:21px;background:#B9C5D6;"></div>
<div class="b" style="left:465px;top:647px;width:1px;height:21px;background:rgba(255,255,255,0.6);"></div>
<div class="b" style="left:540px;top:647px;width:1px;height:21px;background:#B9C5D6;"></div>
<div class="b" style="left:541px;top:647px;width:1px;height:21px;background:rgba(255,255,255,0.6);"></div>
<div class="b" style="left:616px;top:647px;width:1px;height:21px;background:#B9C5D6;"></div>
<div class="b" style="left:617px;top:647px;width:1px;height:21px;background:rgba(255,255,255,0.6);"></div>
<div class="t" style="left:27px;top:653.10px;font-size:12.4px;line-height:12.4px;color:#1E1E1E;width:113px;text-align:center;">0.0213</div>
<div class="t" style="left:141px;top:653.10px;font-size:12.4px;line-height:12.4px;color:#1E1E1E;width:94px;text-align:center;">0.005</div>
<div class="t" style="left:236px;top:653.10px;font-size:12.4px;line-height:12.4px;color:#1E1E1E;width:75px;text-align:center;">11.93</div>
<div class="t" style="left:312px;top:653.10px;font-size:12.4px;line-height:12.4px;color:#1E1E1E;width:76px;text-align:center;">2.609</div>
<div class="t" style="left:389px;top:653.10px;font-size:12.4px;line-height:12.4px;color:#1E1E1E;width:75px;text-align:center;">17.840</div>
<div class="t" style="left:465px;top:653.10px;font-size:12.4px;line-height:12.4px;color:#1E1E1E;width:75px;text-align:center;">8.74</div>
<div class="t" style="left:541px;top:653.10px;font-size:12.4px;line-height:12.4px;color:#1E1E1E;width:75px;text-align:center;">1.4</div>
<div class="b" style="left:3px;top:669px;width:24px;height:22px;background:#A7C5EB;border-bottom:1px solid #E9F0FA;border-right:1px solid #9DB5D5;"></div>
<div class="b" style="left:27px;top:669px;width:795px;height:22px;background:linear-gradient(#F7F9FC,#DCE3F0);border-bottom:1px solid #B9C5D6;border-right:1px solid #9FB0C8;"></div>
<div class="b" style="left:140px;top:669px;width:1px;height:21px;background:#B9C5D6;"></div>
<div class="b" style="left:141px;top:669px;width:1px;height:21px;background:rgba(255,255,255,0.6);"></div>
<div class="b" style="left:235px;top:669px;width:1px;height:21px;background:#B9C5D6;"></div>
<div class="b" style="left:236px;top:669px;width:1px;height:21px;background:rgba(255,255,255,0.6);"></div>
<div class="b" style="left:311px;top:669px;width:1px;height:21px;background:#B9C5D6;"></div>
<div class="b" style="left:312px;top:669px;width:1px;height:21px;background:rgba(255,255,255,0.6);"></div>
<div class="b" style="left:388px;top:669px;width:1px;height:21px;background:#B9C5D6;"></div>
<div class="b" style="left:389px;top:669px;width:1px;height:21px;background:rgba(255,255,255,0.6);"></div>
<div class="b" style="left:464px;top:669px;width:1px;height:21px;background:#B9C5D6;"></div>
<div class="b" style="left:465px;top:669px;width:1px;height:21px;background:rgba(255,255,255,0.6);"></div>
<div class="b" style="left:540px;top:669px;width:1px;height:21px;background:#B9C5D6;"></div>
<div class="b" style="left:541px;top:669px;width:1px;height:21px;background:rgba(255,255,255,0.6);"></div>
<div class="b" style="left:616px;top:669px;width:1px;height:21px;background:#B9C5D6;"></div>
<div class="b" style="left:617px;top:669px;width:1px;height:21px;background:rgba(255,255,255,0.6);"></div>
<div class="t" style="left:27px;top:675.10px;font-size:12.4px;line-height:12.4px;color:#1E1E1E;width:113px;text-align:center;">Ix/Istd Calc</div>
<div class="t" style="left:141px;top:675.10px;font-size:12.4px;line-height:12.4px;color:#1E1E1E;width:94px;text-align:center;">Ix/Istd Meas</div>
<div class="t" style="left:236px;top:675.10px;font-size:12.4px;line-height:12.4px;color:#1E1E1E;width:75px;text-align:center;">Ix/Ipure</div>
<div class="t" style="left:312px;top:675.10px;font-size:12.4px;line-height:12.4px;color:#1E1E1E;width:76px;text-align:center;">Wt%</div>
<div class="t" style="left:389px;top:675.10px;font-size:12.4px;line-height:12.4px;color:#1E1E1E;width:75px;text-align:center;">Dev_Wt</div>
<div class="t" style="left:465px;top:675.10px;font-size:12.4px;line-height:12.4px;color:#1E1E1E;width:75px;text-align:center;">At%</div>
<div class="t" style="left:541px;top:675.10px;font-size:12.4px;line-height:12.4px;color:#1E1E1E;width:75px;text-align:center;">Dev_At</div>
<div class="b" style="left:3px;top:691px;width:24px;height:174px;background:#E1EAF6;border-right:1px solid #C2CCDA;"></div>
<div class="b" style="left:25px;top:691px;width:1px;height:174px;background:#D3DAE6;"></div>
<div class="b" style="left:3px;top:710px;width:23px;height:1px;background:#C9D2DF;"></div>
<div class="b" style="left:27px;top:710px;width:795px;height:1px;background:#DBDCE4;"></div>
<div class="t" style="left:27px;top:696.34px;font-size:12px;line-height:12px;color:#1E1E1E;width:589px;text-align:center;">Accelerating voltage = 5</div>
<div class="b" style="left:3px;top:730px;width:23px;height:1px;background:#C9D2DF;"></div>
<div class="b" style="left:27px;top:730px;width:795px;height:1px;background:#DBDCE4;"></div>
<div class="t" style="left:7.2px;top:716.34px;font-size:12px;line-height:12px;color:#1E1E1E;letter-spacing:-0.6px;">Pd</div>
<div class="b" style="left:140px;top:711px;width:1px;height:19px;background:#D8DAE3;"></div>
<div class="b" style="left:235px;top:711px;width:1px;height:19px;background:#D8DAE3;"></div>
<div class="b" style="left:311px;top:711px;width:1px;height:19px;background:#D8DAE3;"></div>
<div class="b" style="left:388px;top:711px;width:1px;height:19px;background:#D8DAE3;"></div>
<div class="b" style="left:464px;top:711px;width:1px;height:19px;background:#D8DAE3;"></div>
<div class="b" style="left:540px;top:711px;width:1px;height:19px;background:#D8DAE3;"></div>
<div class="t" style="left:27px;top:716.00px;font-size:12.4px;line-height:12.4px;color:#111;width:113px;text-align:right;">0.090</div>
<div class="t" style="left:141px;top:716.00px;font-size:12.4px;line-height:12.4px;color:#111;width:94px;text-align:right;">0.098</div>
<div class="t" style="left:236px;top:716.00px;font-size:12.4px;line-height:12.4px;color:#111;width:75px;text-align:right;">0.098</div>
<div class="t" style="left:312px;top:716.00px;font-size:12.4px;line-height:12.4px;color:#111;width:76px;text-align:right;">11.8980</div>
<div class="t" style="left:389px;top:716.00px;font-size:12.4px;line-height:12.4px;color:#111;width:75px;text-align:right;">0.0057</div>
<div class="t" style="left:465px;top:716.00px;font-size:12.4px;line-height:12.4px;color:#111;width:75px;text-align:right;">20.0109</div>
<div class="t" style="left:541px;top:716.00px;font-size:12.4px;line-height:12.4px;color:#111;width:75px;text-align:right;">0.0180</div>
<div class="b" style="left:3px;top:750px;width:23px;height:1px;background:#C9D2DF;"></div>
<div class="b" style="left:27px;top:750px;width:795px;height:1px;background:#DBDCE4;"></div>
<div class="t" style="left:7.2px;top:736.34px;font-size:12px;line-height:12px;color:#1E1E1E;letter-spacing:-0.6px;">Au</div>
<div class="b" style="left:140px;top:731px;width:1px;height:19px;background:#D8DAE3;"></div>
<div class="b" style="left:235px;top:731px;width:1px;height:19px;background:#D8DAE3;"></div>
<div class="b" style="left:311px;top:731px;width:1px;height:19px;background:#D8DAE3;"></div>
<div class="b" style="left:388px;top:731px;width:1px;height:19px;background:#D8DAE3;"></div>
<div class="b" style="left:464px;top:731px;width:1px;height:19px;background:#D8DAE3;"></div>
<div class="b" style="left:540px;top:731px;width:1px;height:19px;background:#D8DAE3;"></div>
<div class="t" style="left:27px;top:736.00px;font-size:12.4px;line-height:12.4px;color:#111;width:113px;text-align:right;">0.526</div>
<div class="t" style="left:141px;top:736.00px;font-size:12.4px;line-height:12.4px;color:#111;width:94px;text-align:right;">0.274</div>
<div class="t" style="left:236px;top:736.00px;font-size:12.4px;line-height:12.4px;color:#111;width:75px;text-align:right;">0.274</div>
<div class="t" style="left:312px;top:736.00px;font-size:12.4px;line-height:12.4px;color:#111;width:76px;text-align:right;">88.0421</div>
<div class="t" style="left:389px;top:736.00px;font-size:12.4px;line-height:12.4px;color:#111;width:75px;text-align:right;">0.1024</div>
<div class="t" style="left:465px;top:736.00px;font-size:12.4px;line-height:12.4px;color:#111;width:75px;text-align:right;">79.9891</div>
<div class="t" style="left:541px;top:736.00px;font-size:12.4px;line-height:12.4px;color:#111;width:75px;text-align:right;">0.0368</div>
<div class="b" style="left:3px;top:770px;width:23px;height:1px;background:#C9D2DF;"></div>
<div class="b" style="left:27px;top:770px;width:795px;height:1px;background:#DBDCE4;"></div>
<div class="t" style="left:27px;top:756.34px;font-size:12px;line-height:12px;color:#1E1E1E;width:589px;text-align:center;"></div>
<div class="b" style="left:3px;top:790px;width:23px;height:1px;background:#C9D2DF;"></div>
<div class="b" style="left:27px;top:790px;width:795px;height:1px;background:#DBDCE4;"></div>
<div class="t" style="left:27px;top:776.34px;font-size:12px;line-height:12px;color:#1E1E1E;width:589px;text-align:center;">Accelerating voltage = 7</div>
<div class="b" style="left:3px;top:810px;width:23px;height:1px;background:#C9D2DF;"></div>
<div class="b" style="left:27px;top:810px;width:795px;height:1px;background:#DBDCE4;"></div>
<div class="t" style="left:7.2px;top:796.34px;font-size:12px;line-height:12px;color:#1E1E1E;letter-spacing:-0.6px;">Pd</div>
<div class="b" style="left:140px;top:791px;width:1px;height:19px;background:#D8DAE3;"></div>
<div class="b" style="left:235px;top:791px;width:1px;height:19px;background:#D8DAE3;"></div>
<div class="b" style="left:311px;top:791px;width:1px;height:19px;background:#D8DAE3;"></div>
<div class="b" style="left:388px;top:791px;width:1px;height:19px;background:#D8DAE3;"></div>
<div class="b" style="left:464px;top:791px;width:1px;height:19px;background:#D8DAE3;"></div>
<div class="b" style="left:540px;top:791px;width:1px;height:19px;background:#D8DAE3;"></div>
<div class="t" style="left:27px;top:796.00px;font-size:12.4px;line-height:12.4px;color:#111;width:113px;text-align:right;">0.049</div>
<div class="t" style="left:141px;top:796.00px;font-size:12.4px;line-height:12.4px;color:#111;width:94px;text-align:right;">0.042</div>
<div class="t" style="left:236px;top:796.00px;font-size:12.4px;line-height:12.4px;color:#111;width:75px;text-align:right;">0.042</div>
<div class="b" style="left:3px;top:830px;width:23px;height:1px;background:#C9D2DF;"></div>
<div class="b" style="left:27px;top:830px;width:795px;height:1px;background:#DBDCE4;"></div>
<div class="t" style="left:7.2px;top:816.34px;font-size:12px;line-height:12px;color:#1E1E1E;letter-spacing:-0.6px;">Au</div>
<div class="b" style="left:140px;top:811px;width:1px;height:19px;background:#D8DAE3;"></div>
<div class="b" style="left:235px;top:811px;width:1px;height:19px;background:#D8DAE3;"></div>
<div class="b" style="left:311px;top:811px;width:1px;height:19px;background:#D8DAE3;"></div>
<div class="b" style="left:388px;top:811px;width:1px;height:19px;background:#D8DAE3;"></div>
<div class="b" style="left:464px;top:811px;width:1px;height:19px;background:#D8DAE3;"></div>
<div class="b" style="left:540px;top:811px;width:1px;height:19px;background:#D8DAE3;"></div>
<div class="t" style="left:27px;top:816.00px;font-size:12.4px;line-height:12.4px;color:#111;width:113px;text-align:right;">0.302</div>
<div class="t" style="left:141px;top:816.00px;font-size:12.4px;line-height:12.4px;color:#111;width:94px;text-align:right;">0.150</div>
<div class="t" style="left:236px;top:816.00px;font-size:12.4px;line-height:12.4px;color:#111;width:75px;text-align:right;">0.150</div>
<div class="b" style="left:3px;top:850px;width:23px;height:1px;background:#C9D2DF;"></div>
<div class="b" style="left:27px;top:850px;width:795px;height:1px;background:#DBDCE4;"></div>
<div class="t" style="left:27px;top:836.34px;font-size:12px;line-height:12px;color:#1E1E1E;width:589px;text-align:center;"></div>
<div class="t" style="left:27px;top:856.34px;font-size:12px;line-height:12px;color:#1E1E1E;width:589px;text-align:center;">Accelerating voltage = 10</div>
<div class="b" style="left:616px;top:691px;width:1px;height:174px;background:#D8DAE3;"></div>
<div class="b" style="left:822px;top:669px;width:16px;height:198px;background:#F0F0F0;"></div>
<div class="b" style="left:822px;top:685px;width:15px;height:38px;background:#CDCDCD;"></div>
<svg style="left:824.7px;top:673.8px" width="9" height="7" viewBox="0 0 9 7"><path d="M0.9 5.4 L4.5 1.8 L8.1 5.4" fill="none" stroke="#3A3A3A" stroke-width="1.6"/></svg>
<svg style="left:824.7px;top:853.8px" width="9" height="7" viewBox="0 0 9 7"><path d="M0.9 1.6 L4.5 5.2 L8.1 1.6" fill="none" stroke="#3A3A3A" stroke-width="1.6"/></svg>
<div class="b" style="left:0px;top:865px;width:839px;height:2px;background:#FFFFFF;"></div>
<div class="b" style="left:0px;top:867px;width:841px;height:1px;background:#DADADA;"></div>
<div class="b" style="left:0px;top:868px;width:841px;height:1px;background:#F0F0F0;"></div>
<div class="b" style="left:839px;top:234px;width:2px;height:635px;background:#F0F0F0;"></div>
